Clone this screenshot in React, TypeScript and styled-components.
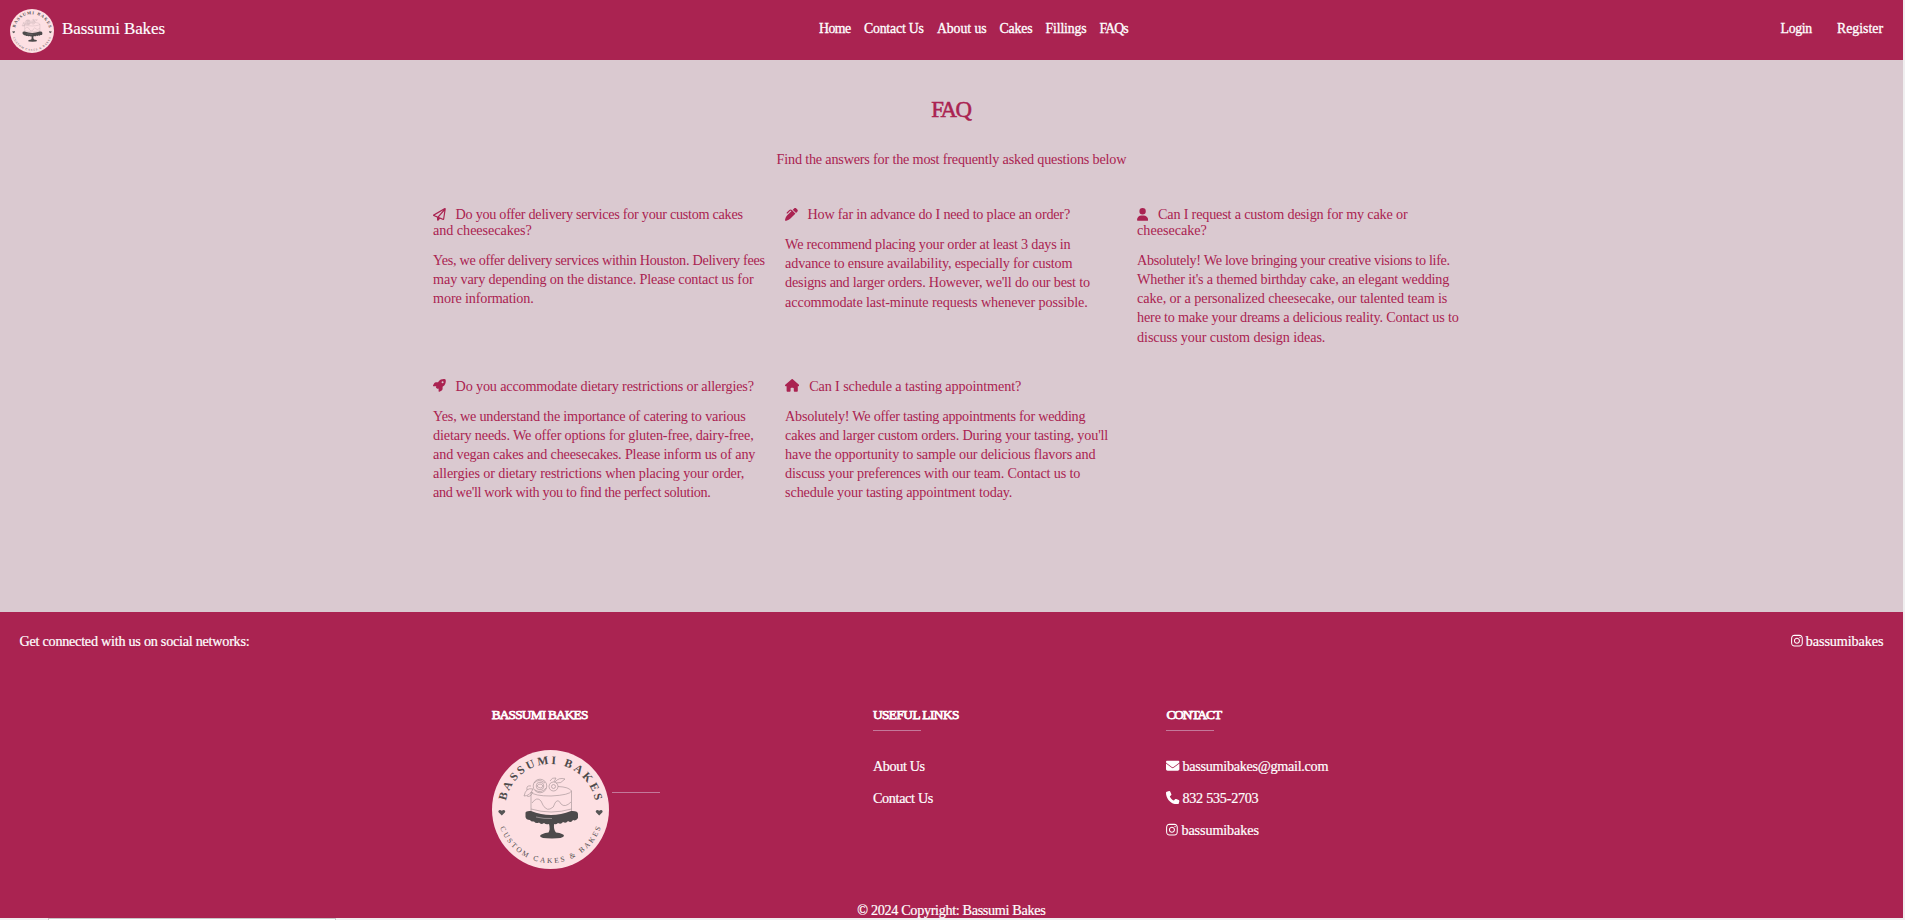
import React from 'react';
import styled, { createGlobalStyle } from 'styled-components';
import type { IconType } from 'react-icons';
import {
  FaEnvelope,
  FaHouse,
  FaInstagram,
  FaPenClip,
  FaPhone,
  FaRegPaperPlane,
  FaRocket,
  FaUser,
} from 'react-icons/fa6';

const berry = '#aa2351';
const blush = '#dac9d0';

const GlobalStyle = createGlobalStyle`
  * { box-sizing: border-box; }
  body {
    margin: 0;
    background: #f0eff0;
    font-family: "Liberation Serif", "Times New Roman", serif;
    font-size: 14.2px;
    overflow: hidden;
  }
  h1, h2, h3, p { margin: 0; padding: 0; font-weight: 400; }
  a { color: inherit; text-decoration: none; }
`;

const Page = styled.div`
  width: 1903px;
  height: 920px;
  display: flex;
  flex-direction: column;
`;

/* Text with its own tracking; the trailing letter space is taken back. */
const Tracked = styled.span<{ $ls: number }>`
  display: inline-block;
  white-space: nowrap;
  letter-spacing: ${(p) => p.$ls}px;
  margin-right: ${(p) => -p.$ls}px;
`;

const Navbar = styled.nav`
  height: 60px;
  flex: none;
  display: flex;
  align-items: flex-start;
  background: ${berry};
  color: #fff;
`;

const Brand = styled.a`
  width: 819px;
  display: flex;
  gap: 8px;
  padding: 9px 0 0 10px;
  font-size: 17px;
  -webkit-text-stroke: 0.15px currentColor;

  span {
    margin-top: 10px;
    line-height: 20px;
  }
`;

const NavGroup = styled.div<{ $gap: number }>`
  display: flex;
  gap: ${(p) => p.$gap}px;
  padding-top: 19px;
  font-size: 13.8px;
  line-height: 20px;
  -webkit-text-stroke: 0.3px currentColor;
`;

const Account = styled(NavGroup)`
  margin-left: auto;
  padding-right: 20px;
`;

const Main = styled.main`
  height: 552px;
  flex: none;
  background: ${blush};
  color: ${berry};
`;

const Title = styled.h1`
  padding-top: 36px;
  height: 89px;
  font-size: 22.8px;
  line-height: 28px;
  text-align: center;
  -webkit-text-stroke: 0.55px currentColor;
`;

const Intro = styled.p`
  height: 58.2px;
  line-height: 20px;
  text-align: center;
`;

const Questions = styled.section`
  margin-left: 433.1px;
  display: grid;
  grid-template-columns: repeat(3, 352px);
  row-gap: 31.8px;
`;

const Question = styled.h2`
  font-size: 14.2px;
  line-height: 15.8px;
  margin-bottom: 12.1px;
`;

const QuestionIcon = styled.span<{ $width: number }>`
  svg {
    width: ${(p) => p.$width}px;
    height: 12.8px;
    margin-right: 9.7px;
    vertical-align: -1.6px;
  }
`;

const Answer = styled.p`
  line-height: 19.2px;
`;

const Row = styled.span`
  display: block;
  white-space: nowrap;
`;

const Footer = styled.footer`
  height: 306px;
  flex: none;
  display: flex;
  flex-direction: column;
  background: ${berry};
  color: #fff;
  -webkit-text-stroke: 0.2px currentColor;
`;

const SocialBar = styled.div`
  display: flex;
  justify-content: space-between;
  align-items: flex-start;
  height: 94.5px;
  padding: 19px 19.5px 0 19.5px;
  line-height: 20px;
`;

const FooterColumns = styled.div`
  display: grid;
  grid-template-columns: 381.2px 293.5px auto;
  padding-left: 491.7px;
  height: 183.5px;
`;

const ColumnTitle = styled.h3`
  font-size: 13.3px;
  line-height: 16px;
  -webkit-text-stroke: 0.75px currentColor;
`;

const Rule = styled.div`
  width: 48px;
  height: 1px;
  background: #c4789a;
`;

const TitleRule = styled(Rule)`
  margin: 7.5px 0 24.5px;
`;

const LogoRow = styled.div`
  display: flex;
  gap: 3.3px;
  margin-top: 27.5px;

  ${Rule} { margin-top: 42px; }
`;

const FooterLink = styled.a`
  display: flex;
  align-items: center;
  line-height: 20px;
  margin-bottom: 12px;
`;

const ContactIcon = styled.span<{ $width: number; $gap: number }>`
  display: flex;
  margin-right: ${(p) => p.$gap}px;

  svg {
    width: ${(p) => p.$width}px;
    height: 13.4px;
    stroke-width: 0;
  }
`;

const Copyright = styled.div`
  line-height: 20px;
  text-align: center;
  margin-top: 9.6px;
  height: 18px;
`;

const StatusEdge = styled.div`
  width: 288px;
  height: 2px;
  margin-left: 48px;
  background: #fff;
  border: 1px solid #c8c8c8;
  border-bottom: 0;
`;

type Line = [text: string, spacing: number];

interface Entry {
  icon: IconType;
  iconWidth: number;
  question: Line[];
  answer: Line[];
}

const navLinks: Line[] = [
  ['Home', -0.57],
  ['Contact Us', -0.18],
  ['About us', -0.06],
  ['Cakes', -0.18],
  ['Fillings', -0.13],
  ['FAQs', -0.95],
];

const entries: Entry[] = [
  {
    icon: FaRegPaperPlane,
    iconWidth: 12.8,
    question: [
      ['Do you offer delivery services for your custom cakes', -0.277],
      ['and cheesecakes?', -0.063],
    ],
    answer: [
      ['Yes, we offer delivery services within Houston. Delivery fees', -0.283],
      ['may vary depending on the distance. Please contact us for', -0.144],
      ['more information.', -0.164],
    ],
  },
  {
    icon: FaPenClip,
    iconWidth: 12.8,
    question: [['How far in advance do I need to place an order?', -0.217]],
    answer: [
      ['We recommend placing your order at least 3 days in', -0.202],
      ['advance to ensure availability, especially for custom', -0.175],
      ["designs and larger orders. However, we'll do our best to", -0.197],
      ['accommodate last-minute requests whenever possible.', -0.118],
    ],
  },
  {
    icon: FaUser,
    iconWidth: 11.2,
    question: [
      ['Can I request a custom design for my cake or', -0.176],
      ['cheesecake?', -0.039],
    ],
    answer: [
      ['Absolutely! We love bringing your creative visions to life.', -0.305],
      ["Whether it's a themed birthday cake, an elegant wedding", -0.166],
      ['cake, or a personalized cheesecake, our talented team is', -0.102],
      ['here to make your dreams a delicious reality. Contact us to', -0.191],
      ['discuss your custom design ideas.', -0.113],
    ],
  },
  {
    icon: FaRocket,
    iconWidth: 12.8,
    question: [['Do you accommodate dietary restrictions or allergies?', -0.166]],
    answer: [
      ['Yes, we understand the importance of catering to various', -0.184],
      ['dietary needs. We offer options for gluten-free, dairy-free,', -0.146],
      ['and vegan cakes and cheesecakes. Please inform us of any', -0.156],
      ['allergies or dietary restrictions when placing your order,', -0.123],
      ["and we'll work with you to find the perfect solution.", -0.329],
    ],
  },
  {
    icon: FaHouse,
    iconWidth: 14.4,
    question: [['Can I schedule a tasting appointment?', -0.117]],
    answer: [
      ['Absolutely! We offer tasting appointments for wedding', -0.252],
      ["cakes and larger custom orders. During your tasting, you'll", -0.16],
      ['have the opportunity to sample our delicious flavors and', -0.173],
      ['discuss your preferences with our team. Contact us to', -0.165],
      ['schedule your tasting appointment today.', -0.139],
    ],
  },
];

const Heart = ({ x }: { x: number }) => (
  <path
    transform={`translate(${x} 62)`}
    d="M0 3.6 L-3 .6 C-4.4 -1 -2.4 -3.4 0 -1.3 C2.4 -3.4 4.4 -1 3 .6 Z"
    fill="#555"
  />
);

const LogoLettering = styled.g`
  fill: #4d4a4b;
  font-family: "Liberation Serif", serif;
  -webkit-text-stroke: 0;
  stroke: none;
`;

const Logo = ({ id, width, height }: { id: string; width: number; height: number }) => (
  <svg width={width} height={height} viewBox="0 0 117 119" preserveAspectRatio="none">
    <defs>
      <path id={`${id}-top`} d="M13 59.5 A45.500 45.500 0 0 1 104 59.5" />
      <path id={`${id}-bottom`} d="M5 59.5 A53.500 53.500 0 0 0 112 59.5" />
    </defs>
    <ellipse cx="58.5" cy="59.5" rx="58.5" ry="59.5" fill="#fde0e3" />
    <LogoLettering>
      <text fontSize="11.6" fontWeight="bold" textAnchor="middle" textLength="125">
        <textPath href={`#${id}-top`} startOffset="50%" textLength="125">BASSUMI BAKES</textPath>
      </text>
      <text fontSize="7.4" textAnchor="middle" textLength="131">
        <textPath href={`#${id}-bottom`} startOffset="50%" textLength="131">CUSTOM CAKES &amp; BAKES</textPath>
      </text>
    </LogoLettering>
    <Heart x={9.8} />
    <Heart x={107.2} />
    <g fill="none" stroke="#9d8d90" strokeWidth="0.6">
      <path d="M39 42 V63 Q59 69 79.500 63 V41" />
      <path d="M39 42 Q42 46 59 46 Q78 45 79.500 41 Q77 37 66 36.500" />
      <path d="M39 59 Q59 65 79.500 59" />
      <path d="M40 53 Q45 46 49 51 Q53 61 58 59 Q62 58 63 53 Q66 48 69 54 Q73 58 79 52" />
      <circle cx="48" cy="36" r="6.800" />
      <circle cx="48" cy="36" r="3.800" />
      <path d="M42 33 Q47 28 53 33 M43 40 Q49 44 54 38 M45 36 Q48 32 51 36 Q49 40 45 36" />
      <circle cx="61.500" cy="36.500" r="4.500" />
      <circle cx="61.500" cy="36.500" r="2" />
      <path d="M41 39 Q34 37 32 46 Q38 46 41 39 M39 36 Q34 35 35 40 M41 42 Q38 48 35 46" />
      <path d="M63 32 Q67 27 73 29 Q69 34 64 33 M58 31 Q60 27 64 28 L62 32" />
    </g>
    <g fill="#4d4a4b">
      <path d="M33.500 62.500 Q34 60.500 39 61 Q59 69 79 61 Q86 60.500 86 64 V68 Q84 71.500 81 70 Q79 73.500 76 71 Q74 74 71 72 Q69 75 66 73 Q64 75 62 74 Q61.500 80 64 82.500 Q72 83.500 72 86 Q71 88.500 60 88.500 Q48 88.500 48 86 Q49 83.500 56.500 82.500 Q58.500 79 57 74 Q54 75 52 73 Q49 75 47 72.500 Q44 74 42 71.500 Q39 72 38 70 Q34 70 33.500 67 Z" />
      <path d="M44 67 Q52 69 60 68.500" fill="none" stroke="#c8babd" strokeWidth="0.600" />
    </g>
  </svg>
);

export default function App() {
  return (
    <>
      <GlobalStyle />
      <Page>
        <Navbar>
          <Brand href="#">
            <Logo id="nav-logo" width={44} height={44} />
            <Tracked $ls={-0.113}>Bassumi Bakes</Tracked>
          </Brand>
          <NavGroup $gap={12.9}>
            {navLinks.map(([text, spacing]) => (
              <a key={text} href="#">
                <Tracked $ls={spacing}>{text}</Tracked>
              </a>
            ))}
          </NavGroup>
          <Account $gap={24.8}>
            <a href="#"><Tracked $ls={-0.33}>Login</Tracked></a>
            <a href="#"><Tracked $ls={0}>Register</Tracked></a>
          </Account>
        </Navbar>

        <Main>
          <Title><Tracked $ls={-1.6}>FAQ</Tracked></Title>
          <Intro>
            <Tracked $ls={-0.186}>Find the answers for the most frequently asked questions below</Tracked>
          </Intro>
          <Questions>
            {entries.map(({ icon: Icon, iconWidth, question, answer }) => (
              <article key={question[0][0]}>
                <Question>
                  {question.map(([text, spacing], i) => (
                    <Row key={text}>
                      {i === 0 && <QuestionIcon $width={iconWidth}><Icon /></QuestionIcon>}
                      <Tracked $ls={spacing}>{text}</Tracked>
                    </Row>
                  ))}
                </Question>
                <Answer>
                  {answer.map(([text, spacing]) => (
                    <Row key={text}>
                      <Tracked $ls={spacing}>{text}</Tracked>
                    </Row>
                  ))}
                </Answer>
              </article>
            ))}
          </Questions>
        </Main>

        <Footer>
          <SocialBar>
            <Tracked $ls={-0.255}>Get connected with us on social networks:</Tracked>
            <FooterLink href="#">
              <ContactIcon $width={11.9} $gap={3}><FaInstagram /></ContactIcon>
              <Tracked $ls={-0.101}>bassumibakes</Tracked>
            </FooterLink>
          </SocialBar>
          <FooterColumns>
            <div>
              <ColumnTitle><Tracked $ls={-0.78}>BASSUMI BAKES</Tracked></ColumnTitle>
              <LogoRow>
                <Logo id="footer-logo" width={117} height={119} />
                <Rule />
              </LogoRow>
            </div>
            <div>
              <ColumnTitle><Tracked $ls={-0.52}>USEFUL LINKS</Tracked></ColumnTitle>
              <TitleRule />
              <FooterLink href="#"><Tracked $ls={-0.36}>About Us</Tracked></FooterLink>
              <FooterLink href="#"><Tracked $ls={-0.33}>Contact Us</Tracked></FooterLink>
            </div>
            <div>
              <ColumnTitle><Tracked $ls={-1}>CONTACT</Tracked></ColumnTitle>
              <TitleRule />
              <FooterLink href="#">
                <ContactIcon $width={13.4} $gap={2.7}><FaEnvelope /></ContactIcon>
                <Tracked $ls={-0.293}>bassumibakes@gmail.com</Tracked>
              </FooterLink>
              <FooterLink href="#">
                <ContactIcon $width={13.4} $gap={2.7}><FaPhone /></ContactIcon>
                <Tracked $ls={-0.27}>832 535-2703</Tracked>
              </FooterLink>
              <FooterLink href="#">
                <ContactIcon $width={11.9} $gap={3.2}><FaInstagram /></ContactIcon>
                <Tracked $ls={-0.12}>bassumibakes</Tracked>
              </FooterLink>
            </div>
          </FooterColumns>
          <Copyright><Tracked $ls={-0.335}>© 2024 Copyright: Bassumi Bakes</Tracked></Copyright>
        </Footer>
        <StatusEdge />
      </Page>
    </>
  );
}
